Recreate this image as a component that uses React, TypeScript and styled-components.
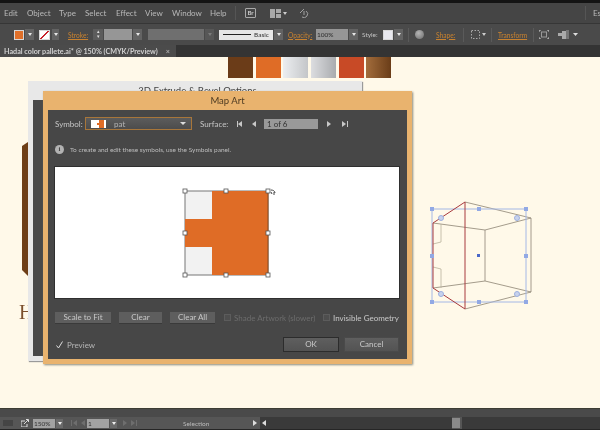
import React from 'react'
import styled, { createGlobalStyle } from 'styled-components'

const GlobalStyle = createGlobalStyle`
  html, body {
    margin: 0;
    padding: 0;
    background: #111;
  }
  #root {
    width: 600px;
    height: 430px;
    overflow: hidden;
  }
`
const Screen = styled.div`
  width: 600px;
  height: 430px;
  display: flex;
  flex-direction: column;
  background: #141414;
  padding-top: 3px;
  box-sizing: border-box;
  overflow: hidden;
  font-family: 'Lato', 'Liberation Sans', sans-serif;
  filter: blur(0.4px);
`
const MenuBar = styled.div`
  height: 20px;
  flex: none;
  display: flex;
  align-items: center;
  background: #454545;
  padding-left: 4px;
  color: #b9b9b9;
  font-size: 8px;
`
const MenuItem = styled.span<{ $w: number }>`
  width: ${({ $w }) => $w}px;
  flex: none;
`
const MenuDivider = styled.div`
  width: 1px;
  height: 14px;
  flex: none;
  margin-left: 4px;
  background: #555;
`
const BridgeBox = styled.div`
  width: 9px;
  height: 8px;
  margin-left: 9px;
  border: 1px solid #aaa;
  border-radius: 1px;
  color: #ccc;
  font-size: 6px;
  font-weight: 700;
  line-height: 8px;
  text-align: center;
`
const MenuRight = styled.div`
  margin-left: auto;
  height: 14px;
  width: 7px;
  padding-left: 7px;
  border-left: 1px solid #555;
  line-height: 14px;
`
const ControlBar = styled.div`
  height: 22px;
  flex: none;
  display: flex;
  align-items: center;
  background: #4a4a4a;
  border-top: 1px solid #363636;
  box-sizing: border-box;
  padding-left: 14px;
  font-size: 6.5px;
  color: #c4c4c4;
`
const Swatch = styled.div<{ $bg: string; $w?: number; $ml?: number }>`
  width: ${({ $w }) => $w ?? 10}px;
  height: 10px;
  flex: none;
  margin-left: ${({ $ml }) => $ml ?? 0}px;
  background: ${({ $bg }) => $bg};
  border: 1px solid #d8d8d8;
  box-sizing: border-box;
`
const DropButton = styled.div<{ $w?: number; $ml?: number; $off?: boolean }>`
  width: ${({ $w }) => $w ?? 9}px;
  height: 11px;
  flex: none;
  margin-left: ${({ $ml }) => $ml ?? 1}px;
  background: ${({ $off }) => ($off ? '#575757' : '#636363')};
  display: flex;
  align-items: center;
  justify-content: center;
  &::after {
    content: '';
    border-left: 2.5px solid transparent;
    border-right: 2.5px solid transparent;
    border-top: 3px solid ${({ $off }) => ($off ? '#7c7c7c' : '#e6e6e6')};
  }
`
const OrangeLink = styled.span<{ $ml: number; $w: number }>`
  margin-left: ${({ $ml }) => $ml}px;
  width: ${({ $w }) => $w}px;
  flex: none;
  color: #c9822f;
  font-size: 6.6px;
  white-space: nowrap;
  text-decoration: underline;
`
const Stepper = styled.div`
  width: 10px;
  height: 11px;
  flex: none;
  margin-left: 5px;
  background: #5c5c5c;
  color: #ddd;
  font-size: 5px;
  line-height: 5px;
  text-align: center;
`
const GreyField = styled.div<{ $w: number; $ml?: number; $bg?: string }>`
  width: ${({ $w }) => $w}px;
  height: 11px;
  flex: none;
  margin-left: ${({ $ml }) => $ml ?? 1}px;
  background: ${({ $bg }) => $bg ?? '#969696'};
  color: #2c2c2c;
  font-size: 6.5px;
  line-height: 11px;
  padding-left: 1px;
  box-sizing: border-box;
`
const StrokeField = styled.div`
  width: 54px;
  height: 10px;
  flex: none;
  margin-left: 5px;
  display: flex;
  align-items: center;
  gap: 3px;
  padding-left: 4px;
  box-sizing: border-box;
  background: #e6e6e6;
  color: #333;
  font-size: 6.5px;
`
const StrokeLine = styled.div`
  width: 28px;
  height: 1px;
  background: #222;
`
const BarText = styled.span<{ $ml: number; $w?: number }>`
  margin-left: ${({ $ml }) => $ml}px;
  width: ${({ $w }) => ($w ? `${$w}px` : 'auto')};
  flex: none;
`
const BarDivider = styled.div<{ $ml: number }>`
  width: 1px;
  height: 14px;
  flex: none;
  margin-left: ${({ $ml }) => $ml}px;
  background: #5a5a5a;
`
const Globe = styled.div`
  width: 9px;
  height: 9px;
  flex: none;
  margin-left: 6px;
  border-radius: 50%;
  background: radial-gradient(circle at 40% 35%, #b5b5b5, #6b6b6b);
`
const BarIcon = styled.svg<{ $ml: number }>`
  flex: none;
  margin-left: ${({ $ml }) => $ml}px;
`
const TabBar = styled.div`
  height: 12px;
  flex: none;
  display: flex;
  background: #343434;
`
const Tab = styled.div`
  width: 176px;
  display: flex;
  align-items: center;
  justify-content: space-between;
  box-sizing: border-box;
  padding: 0 4px;
  background: #4b4b4b;
  color: #d0d0d0;
  font-size: 7.2px;
  font-weight: 700;
  white-space: nowrap;
`
const TabClose = styled.span`
  margin-right: 2px;
  color: #aaa;
`
const Canvas = styled.div`
  flex: 1;
  position: relative;
  background: #fff9e9;
  overflow: hidden;
`
const SwatchRow = styled.div`
  position: absolute;
  left: 228px;
  top: 0;
  display: flex;
  gap: 2.7px;
`
const PaletteChip = styled.div<{ $bg: string }>`
  width: 25px;
  height: 21px;
  background: ${({ $bg }) => $bg};
`
const LeftArt = styled.svg`
  position: absolute;
  left: 20px;
  top: 84px;
`
const CutLetter = styled.div`
  position: absolute;
  left: 19px;
  top: 243px;
  color: #7c4f2c;
  font-family: 'Liberation Serif', serif;
  font-size: 20px;
  line-height: 24px;
`
const BackPanel = styled.div`
  position: absolute;
  left: 28px;
  top: 24px;
  width: 334px;
  height: 280px;
  box-sizing: border-box;
  padding-left: 5px;
  background: #e8e8e8;
  box-shadow: 1px 1px 1px #9a9a9a;
`
const BackTitle = styled.div`
  height: 19px;
  color: #444;
  font-size: 9.5px;
  line-height: 19px;
  text-align: center;
  white-space: nowrap;
`
const BackBody = styled.div`
  height: 256px;
  background: #494949;
`
const Dialog = styled.div`
  position: absolute;
  left: 43px;
  top: 34px;
  width: 369px;
  height: 273px;
  display: flex;
  flex-direction: column;
  box-sizing: border-box;
  padding: 0 5px 5px;
  background: #e9b36e;
  box-shadow: 1px 1px 2px #8a8a7c;
`
const DialogTitle = styled.div`
  height: 19px;
  flex: none;
  color: #4c3a22;
  font-size: 9.5px;
  line-height: 19px;
  text-align: center;
`
const DialogBody = styled.div`
  flex: 1;
  display: flex;
  flex-direction: column;
  box-sizing: border-box;
  padding: 7px 8px 0 7px;
  background: #474747;
  color: #c6c6c6;
  font-size: 8px;
`
const SymbolRow = styled.div`
  height: 13px;
  display: flex;
  align-items: center;
`
const SymbolLabel = styled.span`
  width: 27px;
  flex: none;
`
const SymbolSelect = styled.div`
  width: 107px;
  height: 13px;
  flex: none;
  margin-left: 3px;
  display: flex;
  align-items: center;
  box-sizing: border-box;
  padding: 0 5px;
  border: 1px solid #a8763a;
  background: linear-gradient(#5c5c5c, #4c4c4c);
  color: #b4b4b4;
  font-size: 8px;
`
const SymbolThumb = styled.svg`
  flex: none;
  margin-right: 8px;
`
const SelectCaret = styled.span`
  margin-left: auto;
  border-left: 3px solid transparent;
  border-right: 3px solid transparent;
  border-top: 3px solid #ddd;
`
const SurfaceLabel = styled.span`
  margin-left: 8px;
  width: 33px;
  flex: none;
`
const NavGroup = styled.svg<{ $ml: number }>`
  flex: none;
  margin-left: ${({ $ml }) => $ml}px;
`
const SurfaceField = styled.div`
  width: 54px;
  height: 10px;
  flex: none;
  margin-left: 4px;
  padding-left: 3px;
  box-sizing: border-box;
  background: #999;
  color: #333;
  font-size: 8px;
  line-height: 10px;
`
const InfoRow = styled.div`
  height: 12px;
  margin-top: 13px;
  display: flex;
  align-items: center;
  gap: 6px;
  font-size: 6.5px;
  color: #bdbdbd;
`
const InfoDot = styled.div`
  width: 9px;
  height: 9px;
  border-radius: 50%;
  background: #b2b2b2;
  color: #474747;
  font-family: 'Liberation Serif', serif;
  font-size: 7px;
  font-weight: 700;
  line-height: 9px;
  text-align: center;
`
const Preview = styled.div`
  height: 131px;
  margin-top: 12px;
  display: flex;
  align-items: center;
  justify-content: center;
  background: #fff;
  box-shadow: 0 0 0 1px #2f2f2f;
`
const OptionsRow = styled.div`
  height: 11px;
  margin-top: 14px;
  display: flex;
  align-items: center;
`
const SmallButton = styled.div<{ $w: number; $ml?: number }>`
  width: ${({ $w }) => $w}px;
  height: 11px;
  flex: none;
  margin-left: ${({ $ml }) => $ml ?? 0}px;
  background: #5e5e5e;
  box-shadow: 0 1px 0 #3a3a3a;
  color: #c8c8c8;
  font-size: 8px;
  line-height: 11px;
  text-align: center;
`
const CheckBox = styled.div<{ $ml: number }>`
  width: 7px;
  height: 7px;
  flex: none;
  box-sizing: border-box;
  margin-left: ${({ $ml }) => $ml}px;
  background: #4e4e4e;
  border: 1px solid #5c5c5c;
`
const CheckLabel = styled.span<{ $off?: boolean; $w: number }>`
  margin-left: 3px;
  width: ${({ $w }) => $w}px;
  flex: none;
  font-size: 8px;
  white-space: nowrap;
  color: ${({ $off }) => ($off ? '#6c6c6c' : '#c8c8c8')};
`
const FooterRow = styled.div`
  margin-top: 14px;
  display: flex;
  align-items: center;
`
const PreviewCheck = styled.svg`
  flex: none;
  margin-left: 1px;
`
const PreviewLabel = styled.span`
  margin-left: 4px;
  width: 216px;
  flex: none;
  font-size: 8px;
  color: #b6b6b6;
`
const FooterButton = styled.div<{ $primary?: boolean; $ml?: number }>`
  width: ${({ $primary }) => ($primary ? 56 : 55)}px;
  height: 15px;
  flex: none;
  box-sizing: border-box;
  margin-left: ${({ $ml }) => $ml ?? 0}px;
  background: linear-gradient(#5f5f5f, #535353);
  border: 1px solid ${({ $primary }) => ($primary ? '#2c2c2c' : '#4a4a4a')};
  color: #c9c9c9;
  font-size: 8px;
  line-height: 13px;
  text-align: center;
`
const RightArt = styled.svg`
  position: absolute;
  left: 420px;
  top: 138px;
`
const StatusBar = styled.div`
  height: 22px;
  flex: none;
  display: flex;
  flex-direction: column;
  background: #4a4a4a;
  border-top: 1px solid #3d3d33;
  box-sizing: border-box;
`
const StatusTop = styled.div`
  height: 8px;
  flex: none;
`
const StatusRow = styled.div`
  height: 12px;
  flex: none;
  display: flex;
  align-items: center;
  background: #565656;
  color: #bbb;
  font-size: 6.5px;
`
const StatusField = styled.div<{ $ml: number; $w: number }>`
  width: ${({ $w }) => $w}px;
  height: 9px;
  flex: none;
  margin-left: ${({ $ml }) => $ml}px;
  box-sizing: border-box;
  padding-left: 1px;
  background: #a2a2a2;
  color: #333;
  font-size: 6.5px;
  line-height: 9px;
`
const StatusDrop = styled.div`
  width: 7px;
  height: 9px;
  flex: none;
  margin-left: 1px;
  background: #6a6a6a;
  display: flex;
  align-items: center;
  justify-content: center;
  &::after {
    content: '';
    border-left: 2px solid transparent;
    border-right: 2px solid transparent;
    border-top: 3px solid #eee;
  }
`
const StatusText = styled.span`
  margin-left: 46px;
  width: 70px;
  flex: none;
`
const ScrollTrack = styled.div<{ $w: number }>`
  width: ${({ $w }) => $w}px;
  height: 12px;
  flex: none;
  margin-left: 2px;
  background: #3a3a3a;
  display: flex;
  align-items: center;
  padding-left: 2px;
  box-sizing: border-box;
`
const ScrollThumb = styled.div`
  width: 8px;
  height: 10px;
  flex: none;
  background: #8a8a8a;
`
const BottomEdge = styled.div`
  flex: 1;
  background: #262626;
`

const menuItems: [string, number][] = [
  ['Edit', 23],
  ['Object', 32],
  ['Type', 26],
  ['Select', 31],
  ['Effect', 29],
  ['View', 27],
  ['Window', 38],
  ['Help', 21],
]

const handles = [
  [186, 190],
  [227, 190],
  [269, 190],
  [186, 232],
  [269, 232],
  [186, 274],
  [227, 274],
  [269, 274],
]

const artHandles = [
  [432, 209],
  [479, 209],
  [526, 209],
  [432, 256],
  [526, 256],
  [432, 302],
  [479, 302],
  [526, 302],
]

const artCircles = [
  [441, 218],
  [517, 218],
  [441, 294],
  [517, 294],
]

const triangle = (x: number, dir: number) => `M${x} 2 L${x + 4 * dir} 5 L${x} 8 Z`

export default function App() {
  return (
    <Screen>
      <GlobalStyle />
      <MenuBar>
        {menuItems.map(([label, w]) => (
          <MenuItem key={label} $w={w}>
            {label}
          </MenuItem>
        ))}
        <MenuDivider />
        <BridgeBox>Br</BridgeBox>
        <BarIcon $ml={14} width="18" height="9" viewBox="0 0 18 9">
          <path d="M0 0h5v9H0zM6 0h5v4H6zM6 5h5v4H6z" fill="#a8a8a8" />
          <path d="M13 3l4 0-2 3z" fill="#ccc" />
        </BarIcon>
        <BarIcon $ml={11} width="10" height="10" viewBox="0 0 10 10">
          <path d="M1 5l4-4 M3 9a3.500 3.500 0 1 0 4-6 M5 3v4" stroke="#a0a0a0" fill="none" />
        </BarIcon>
        <MenuRight>Es</MenuRight>
      </MenuBar>
      <ControlBar>
        <Swatch $bg="#e0702a" />
        <DropButton />
        <Swatch $bg="linear-gradient(135deg,#fff 42%,#c8232c 44%,#c8232c 56%,#fff 58%)" $w={11} $ml={5} />
        <DropButton $w={7} $ml={2} />
        <OrangeLink $ml={9} $w={20}>
          Stroke:
        </OrangeLink>
        <Stepper>
          ▴
          <br />▾
        </Stepper>
        <GreyField $w={28} />
        <DropButton />
        <GreyField $w={56} $ml={6} $bg="#6f6f6f" />
        <DropButton $off />
        <StrokeField>
          <StrokeLine />
          Basic
        </StrokeField>
        <DropButton />
        <OrangeLink $ml={5} $w={23}>
          Opacity:
        </OrangeLink>
        <GreyField $w={32} $ml={5}>
          100%
        </GreyField>
        <DropButton />
        <BarText $ml={4} $w={16}>
          Style:
        </BarText>
        <Swatch $bg="#e8e8ee" $ml={5} />
        <DropButton />
        <BarDivider $ml={5} />
        <Globe />
        <OrangeLink $ml={12} $w={20}>
          Shape:
        </OrangeLink>
        <BarDivider $ml={7} />
        <BarIcon $ml={7} width="15" height="9" viewBox="0 0 15 9">
          <rect x="0.5" y="0.5" width="8" height="8" fill="none" stroke="#aaa" strokeDasharray="1.5 1.5" />
          <path d="M11 3h4l-2 3z" fill="#ccc" />
        </BarIcon>
        <BarDivider $ml={5} />
        <OrangeLink $ml={6} $w={30}>
          Transform
        </OrangeLink>
        <BarDivider $ml={5} />
        <BarIcon $ml={5} width="10" height="9" viewBox="0 0 10 9">
          <path d="M0 2V0h2M8 0h2v2M10 7v2H8M2 9H0V7" stroke="#ccc" fill="none" />
          <rect x="2.5" y="2" width="5" height="5" fill="none" stroke="#999" />
        </BarIcon>
        <BarIcon $ml={9} width="20" height="9" viewBox="0 0 20 9">
          <path d="M0 3h4V1h4v8H4V6H0z" fill="#aaa" />
          <path d="M8 0h3v9H8z" fill="#777" />
          <path d="M15 3h5l-2.500 3z" fill="#ddd" />
        </BarIcon>
      </ControlBar>
      <TabBar>
        <Tab>
          Hadal color pallete.ai* @ 150% (CMYK/Preview)
          <TabClose>×</TabClose>
        </Tab>
      </TabBar>
      <Canvas>
        <SwatchRow>
          <PaletteChip $bg="#6b3c18" />
          <PaletteChip $bg="#df6c26" />
          <PaletteChip $bg="linear-gradient(90deg,#eceef0,#c4c6c9)" />
          <PaletteChip $bg="linear-gradient(90deg,#dcdde0,#a9abae)" />
          <PaletteChip $bg="#c84a26" />
          <PaletteChip $bg="linear-gradient(90deg,#a36d3c,#6a3d18)" />
        </SwatchRow>
        <LeftArt width="8" height="136" viewBox="0 0 8 136">
          <path d="M2 5L8 1V135L2 129Z" fill="#6e3f17" />
        </LeftArt>
        <CutLetter>H</CutLetter>
        <BackPanel>
          <BackTitle>3D Extrude &amp; Bevel Options</BackTitle>
          <BackBody />
        </BackPanel>
        <Dialog>
          <DialogTitle>Map Art</DialogTitle>
          <DialogBody>
            <SymbolRow>
              <SymbolLabel>Symbol:</SymbolLabel>
              <SymbolSelect>
                <SymbolThumb width="15" height="8" viewBox="0 0 15 8">
                  <rect width="15" height="8" fill="#fff" />
                  <path d="M6 3h2V0h5v8H8V5H6z" fill="#df6c26" />
                </SymbolThumb>
                pat
                <SelectCaret />
              </SymbolSelect>
              <SurfaceLabel>Surface:</SurfaceLabel>
              <NavGroup $ml={3} width="24" height="10" viewBox="0 0 24 10">
                <path d={triangle(6, -1)} fill="#c8c8c8" />
                <rect x="1" y="2" width="1" height="6" fill="#c8c8c8" />
                <path d={triangle(20, -1)} fill="#c8c8c8" />
              </NavGroup>
              <SurfaceField>1 of 6</SurfaceField>
              <NavGroup $ml={8} width="24" height="10" viewBox="0 0 24 10">
                <path d={triangle(1, 1)} fill="#c8c8c8" />
                <path d={triangle(16, 1)} fill="#c8c8c8" />
                <rect x="21" y="2" width="1" height="6" fill="#c8c8c8" />
              </NavGroup>
            </SymbolRow>
            <InfoRow>
              <InfoDot>i</InfoDot>
              To create and edit these symbols, use the Symbols panel.
            </InfoRow>
            <Preview>
              <svg width="100" height="100" viewBox="178 182 100 100">
                <rect x="186" y="190" width="83" height="84" fill="#f2f2f2" stroke="#777" />
                <path d="M213 190H269V274H213V246H186V218H213Z" fill="#df6c26" />
                <path d="M269 190V274" stroke="#8a4a1e" />
                {handles.map(([x, y]) => (
                  <rect key={`${x}-${y}`} x={x - 2} y={y - 2} width="4" height="4" fill="#fff" stroke="#555" strokeWidth="0.8" />
                ))}
                <path d="M272 189c2 0 4 1 4 3m-1-1l0 3 m-3-3l1 2" fill="none" stroke="#444" strokeWidth="1" />
              </svg>
            </Preview>
            <OptionsRow>
              <SmallButton $w={56}>Scale to Fit</SmallButton>
              <SmallButton $w={43} $ml={8}>
                Clear
              </SmallButton>
              <SmallButton $w={45} $ml={8}>
                Clear All
              </SmallButton>
              <CheckBox $ml={9} />
              <CheckLabel $off $w={82}>
                Shade Artwork (slower)
              </CheckLabel>
              <CheckBox $ml={7} />
              <CheckLabel $w={66}>Invisible Geometry</CheckLabel>
            </OptionsRow>
            <FooterRow>
              <PreviewCheck width="7" height="8" viewBox="0 0 7 8">
                <path d="M0.500 4.500L2.500 7L6.500 0.500" fill="none" stroke="#ddd" strokeWidth="1" />
              </PreviewCheck>
              <PreviewLabel>Preview</PreviewLabel>
              <FooterButton $primary>OK</FooterButton>
              <FooterButton $ml={5}>Cancel</FooterButton>
            </FooterRow>
          </DialogBody>
        </Dialog>
        <RightArt width="120" height="115" viewBox="420 195 120 115">
          <g fill="none" stroke="#8d8474" strokeWidth="0.8">
            <path d="M465 202L531 218V292L465 309" />
            <path d="M433 223L485 230L531 218M485 230V281M433 288L485 281L531 292" />
            <path d="M433 244L441 242V224M433 267L441 269V288" stroke="#b9b29c" />
          </g>
          <rect x="432" y="209" width="94" height="93" fill="none" stroke="#a4b8e6" />
          <path d="M465 202V309M465 202L433 223V288L465 309" fill="none" stroke="#a83a3e" strokeWidth="1" />
          {artCircles.map(([x, y]) => (
            <circle key={`${x}-${y}`} cx={x} cy={y} r="2.500" fill="#c9d3ec" stroke="#9db0e0" />
          ))}
          {artHandles.map(([x, y]) => (
            <rect key={`${x}-${y}`} x={x - 2} y={y - 2} width="4" height="4" fill="#92a9e4" />
          ))}
          <rect x="477" y="254" width="3" height="3" fill="#4a68c8" />
        </RightArt>
      </Canvas>
      <StatusBar>
        <StatusTop />
        <StatusRow>
          <BarIcon $ml={3} width="10" height="6" viewBox="0 0 10 6">
            <rect width="10" height="6" fill="#454545" />
          </BarIcon>
          <BarIcon $ml={8} width="8" height="8" viewBox="0 0 8 8">
            <path d="M0 2h4M0 2v6h6V5M3 5l4-4M5 0.500h2.500V3" fill="none" stroke="#ddd" />
          </BarIcon>
          <StatusField $ml={4} $w={22}>
            150%
          </StatusField>
          <StatusDrop />
          <BarIcon $ml={8} width="14" height="6" viewBox="0 0 14 6">
            <path d="M0 0h1v6H0zM6 0L2 3l4 3zM14 0l-4 3 4 3z" fill="#6e6e6e" />
          </BarIcon>
          <StatusField $ml={2} $w={22}>
            1
          </StatusField>
          <StatusDrop />
          <BarIcon $ml={6} width="14" height="6" viewBox="0 0 14 6">
            <path d="M0 0l4 3-4 3zM8 0l4 3-4 3zM13 0h1v6h-1z" fill="#6e6e6e" />
          </BarIcon>
          <StatusText>Selection</StatusText>
          <svg width="5" height="6" viewBox="0 0 5 6">
            <path d="M0 0l4 3-4 3z" fill="#ddd" />
          </svg>
          <ScrollTrack $w={192}>
            <svg width="4" height="6" viewBox="0 0 4 6">
              <path d="M4 0L0 3l4 3z" fill="#ddd" />
            </svg>
          </ScrollTrack>
          <ScrollThumb />
          <ScrollTrack $w={138} />
        </StatusRow>
        <BottomEdge />
      </StatusBar>
    </Screen>
  )
}
